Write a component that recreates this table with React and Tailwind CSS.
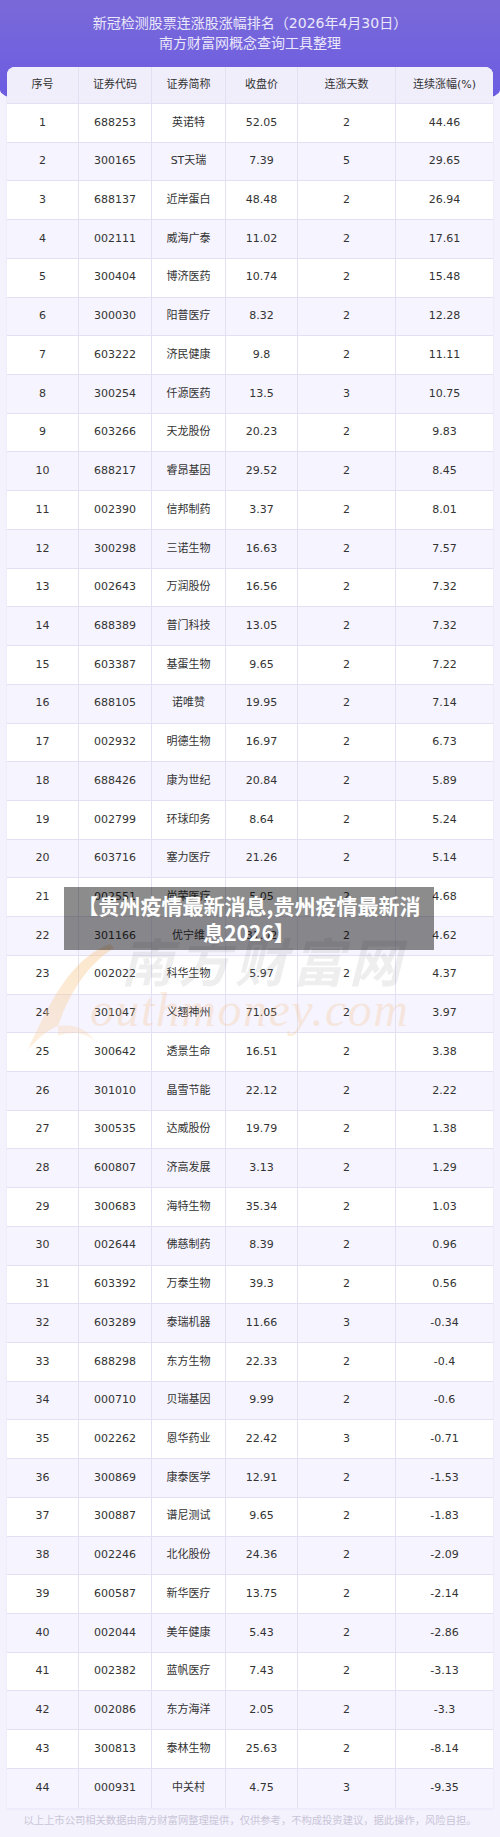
import React from 'react';

// 连涨股数据
const rows = [
  [1, '688253', '英诺特', '52.05', 2, '44.46'],
  [2, '300165', 'ST天瑞', '7.39', 5, '29.65'],
  [3, '688137', '近岸蛋白', '48.48', 2, '26.94'],
  [4, '002111', '威海广泰', '11.02', 2, '17.61'],
  [5, '300404', '博济医药', '10.74', 2, '15.48'],
  [6, '300030', '阳普医疗', '8.32', 2, '12.28'],
  [7, '603222', '济民健康', '9.8', 2, '11.11'],
  [8, '300254', '仟源医药', '13.5', 3, '10.75'],
  [9, '603266', '天龙股份', '20.23', 2, '9.83'],
  [10, '688217', '睿昂基因', '29.52', 2, '8.45'],
  [11, '002390', '信邦制药', '3.37', 2, '8.01'],
  [12, '300298', '三诺生物', '16.63', 2, '7.57'],
  [13, '002643', '万润股份', '16.56', 2, '7.32'],
  [14, '688389', '普门科技', '13.05', 2, '7.32'],
  [15, '603387', '基蛋生物', '9.65', 2, '7.22'],
  [16, '688105', '诺唯赞', '19.95', 2, '7.14'],
  [17, '002932', '明德生物', '16.97', 2, '6.73'],
  [18, '688426', '康为世纪', '20.84', 2, '5.89'],
  [19, '002799', '环球印务', '8.64', 2, '5.24'],
  [20, '603716', '塞力医疗', '21.26', 2, '5.14'],
  [21, '002551', '尚荣医疗', '5.05', 2, '4.68'],
  [22, '301166', '优宁维', '31.02', 2, '4.62'],
  [23, '002022', '科华生物', '5.97', 2, '4.37'],
  [24, '301047', '义翘神州', '71.05', 2, '3.97'],
  [25, '300642', '透景生命', '16.51', 2, '3.38'],
  [26, '301010', '晶雪节能', '22.12', 2, '2.22'],
  [27, '300535', '达威股份', '19.79', 2, '1.38'],
  [28, '600807', '济高发展', '3.13', 2, '1.29'],
  [29, '300683', '海特生物', '35.34', 2, '1.03'],
  [30, '002644', '佛慈制药', '8.39', 2, '0.96'],
  [31, '603392', '万泰生物', '39.3', 2, '0.56'],
  [32, '603289', '泰瑞机器', '11.66', 3, '-0.34'],
  [33, '688298', '东方生物', '22.33', 2, '-0.4'],
  [34, '000710', '贝瑞基因', '9.99', 2, '-0.6'],
  [35, '002262', '恩华药业', '22.42', 3, '-0.71'],
  [36, '300869', '康泰医学', '12.91', 2, '-1.53'],
  [37, '300887', '谱尼测试', '9.65', 2, '-1.83'],
  [38, '002246', '北化股份', '24.36', 2, '-2.09'],
  [39, '600587', '新华医疗', '13.75', 2, '-2.14'],
  [40, '002044', '美年健康', '5.43', 2, '-2.86'],
  [41, '002382', '蓝帆医疗', '7.43', 2, '-3.13'],
  [42, '002086', '东方海洋', '2.05', 2, '-3.3'],
  [43, '300813', '泰林生物', '25.63', 2, '-8.14'],
  [44, '000931', '中关村', '4.75', 3, '-9.35'],
];

const headers = ['序号', '证券代码', '证券简称', '收盘价', '连涨天数', '连续涨幅(%)'];

const gridCols = 'grid grid-cols-[72px_73px_74px_72px_98px_97px]';

function Cell({ children, last }) {
  return (
    <div
      className={`flex items-center justify-center ${last ? '' : 'border-r border-[#e4e0f4]'}`}
    >
      {children}
    </div>
  );
}

// 南方财富网 水印
function Watermark() {
  return (
    <>
      <svg
        className="absolute left-[18px] top-[932px] pointer-events-none"
        width="110"
        height="125"
        viewBox="0 0 110 125"
      >
        <defs>
          <linearGradient id="sw" x1="0" y1="0" x2="0" y2="1">
            <stop offset="0" stopColor="#f7c27e" />
            <stop offset="1" stopColor="#f9d6b0" />
          </linearGradient>
        </defs>
        <path
          d="M92 12 C60 24 40 55 22 92 C16 104 12 112 10 118 C22 104 30 98 40 94 C52 60 70 32 96 16 Z"
          fill="url(#sw)"
          opacity="0.4"
        />
        <path
          d="M40 94 C55 92 68 96 76 108 C66 100 52 99 40 104 Z"
          fill="#f8cfa2"
          opacity="0.3"
        />
      </svg>
      <div className="absolute left-[121px] top-[934px] pointer-events-none text-[52px] leading-none font-bold italic tracking-[5px] text-[#8f8f8f]/15 font-['Noto_Sans_CJK_SC',sans-serif]">
        南方财富网
      </div>
      <div className="absolute left-[90px] top-[986px] pointer-events-none text-[48px] leading-none italic tracking-[1.5px] text-[#f5b978]/25 font-['Liberation_Serif',serif]">
        outhmoney.com
      </div>
    </>
  );
}

export default function App() {
  return (
    <div className="relative w-[500px] min-h-[1837px] overflow-hidden bg-[#f4f2fd] font-['DejaVu_Sans','Noto_Sans_CJK_SC',sans-serif]">
      {/* 顶部紫色标题区 */}
      <header className="h-[118px] rounded-b-[50%_28px] bg-gradient-to-b from-[#7a69d8] to-[#6959e4] pt-[13px] text-center text-[14px] leading-[20px] text-white/85">
        <p>新冠检测股票连涨股涨幅排名（2026年4月30日）</p>
        <p>南方财富网概念查询工具整理</p>
      </header>

      {/* 表格 */}
      <div className="relative mx-[7px] -mt-[51px] overflow-hidden rounded-t-[8px] bg-white text-[11px] text-[#333] shadow-[0_1px_3px_rgba(120,100,200,0.08)]">
        <div className={`${gridCols} h-[37px] border-b border-[#e4e0f4] bg-[#f1eefc]`}>
          {headers.map((h, i) => (
            <Cell key={h} last={i === headers.length - 1}>
              {h}
            </Cell>
          ))}
        </div>
        {rows.map((r, idx) => (
          <div
            key={r[0]}
            className={`${gridCols} h-[38.73px] ${idx === rows.length - 1 ? '' : 'border-b border-[#e4e0f4]'} ${idx % 2 === 1 ? 'bg-[#f6f4fe]' : 'bg-white'}`}
          >
            {r.map((v, i) => (
              <Cell key={i} last={i === r.length - 1}>
                {v}
              </Cell>
            ))}
          </div>
        ))}
      </div>

      <p className="mt-[5px] text-center text-[10.3px] leading-[14px] text-[#c9c5d8] font-['Noto_Sans_CJK_SC',sans-serif]">
        以上上市公司相关数据由南方财富网整理提供，仅供参考，不构成投资建议，据此操作，风险自担。
      </p>

      <Watermark />

      {/* 文章标题浮层 */}
      <div className="absolute left-[64px] top-[887px] w-[370px] h-[63px] bg-black/45 px-[12px] py-[4.5px] text-center text-[21px] leading-[27px] font-bold text-white font-['Noto_Sans_CJK_SC',sans-serif]">
        【贵州疫情最新消息,贵州疫情最新消息2026】
      </div>
    </div>
  );
}
